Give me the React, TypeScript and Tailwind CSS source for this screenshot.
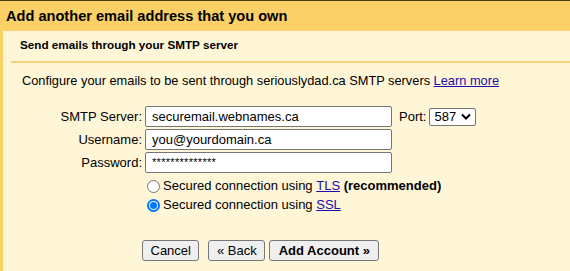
import React from "react";

const font = { fontFamily: '"Liberation Sans", Arial, sans-serif' };

function Field({ label, value, small }: { label: string; value: string; small?: boolean }) {
  return (
    <>
      <span className="text-right pr-[3px] leading-[21px]">{label}</span>
      <div className="h-[21px] w-[247px] border border-[#767676] rounded-[2px] bg-white px-[6px] flex items-center">
        <span className={small ? "text-[11px] tracking-[0.3px]" : ""}>{value}</span>
      </div>
    </>
  );
}

export default function App() {
  return (
    <div className="w-[570px] h-[271px] overflow-hidden bg-[#fff6d8] text-[13px] text-black" style={font}>
      <div className="border-t border-[#4a3a12] h-[31px] bg-gradient-to-b from-[#fad066] to-[#fcd168] flex items-center pl-[6px]">
        <h1 className="text-[14.6px] font-bold leading-none pt-[1px]">Add another email address that you own</h1>
      </div>
      <div className="border-l-[3px] border-[#fcd266] h-[240px]">
        <div className="pl-[17px] pt-[7px] h-[30px] text-[11.7px] leading-[14px] font-bold">Send emails through your SMTP server</div>
        <div className="ml-[8px] h-[2px] bg-[#f3d27c]" />
        <p className="pl-[19px] pt-[8px] text-[12.8px]">
          Configure your emails to be sent through seriouslydad.ca SMTP servers{" "}
          <a className="text-[#1a0dab] underline">Learn more</a>
        </p>
        <div className="flex items-start mt-[16px]">
          <div className="grid grid-cols-[142px_247px] gap-y-[2px]">
            <Field label="SMTP Server:" value="securemail.webnames.ca" />
            <Field label="Username:" value="you@yourdomain.ca" />
            <Field label="Password:" value="**************" small />
          </div>
          <div className="flex items-center ml-[7px] h-[21px]">
            <span>Port:</span>
            <div className="ml-[3px] h-[18px] w-[47px] border border-[#767676] rounded-[2px] bg-white flex items-center pl-[4px] gap-[4px]">
              <span>587</span>
              <svg width="10" height="7" viewBox="0 0 10 7" className="ml-[1px]">
                <path d="M1 1.5 L5 5.5 L9 1.5" fill="none" stroke="black" strokeWidth="2" />
              </svg>
            </div>
          </div>
        </div>
        <div className="pl-[144px] pt-[5px] flex flex-col gap-[3px]">
          <label className="flex items-center h-[16px]">
            <span className="w-[13px] h-[13px] rounded-full border border-[#767676] bg-white mr-[3px]" />
            Secured connection using&nbsp;<a className="text-[#1a0dab] underline">TLS</a>&nbsp;<b>(recommended)</b>
          </label>
          <label className="flex items-center h-[16px]">
            <span className="w-[13px] h-[13px] rounded-full bg-[#0075ff] flex items-center justify-center mr-[3px]">
              <span className="w-[9px] h-[9px] rounded-full bg-white flex items-center justify-center">
                <span className="w-[7px] h-[7px] rounded-full bg-[#0075ff]" />
              </span>
            </span>
            Secured connection using&nbsp;<a className="text-[#1a0dab] underline">SSL</a>
          </label>
        </div>
        <div className="pl-[139px] pt-[27px] flex gap-[9px]">
          <button className="h-[21px] px-[7.5px] border border-[#767676] rounded-[3px] bg-[#efefef]">Cancel</button>
          <div className="flex gap-[4px]">
            <button className="h-[21px] px-[7.5px] border border-[#767676] rounded-[3px] bg-[#efefef]">« Back</button>
            <button className="h-[21px] px-[8.5px] border border-[#767676] rounded-[3px] bg-[#efefef] font-bold">Add Account »</button>
          </div>
        </div>
      </div>
    </div>
  );
}
